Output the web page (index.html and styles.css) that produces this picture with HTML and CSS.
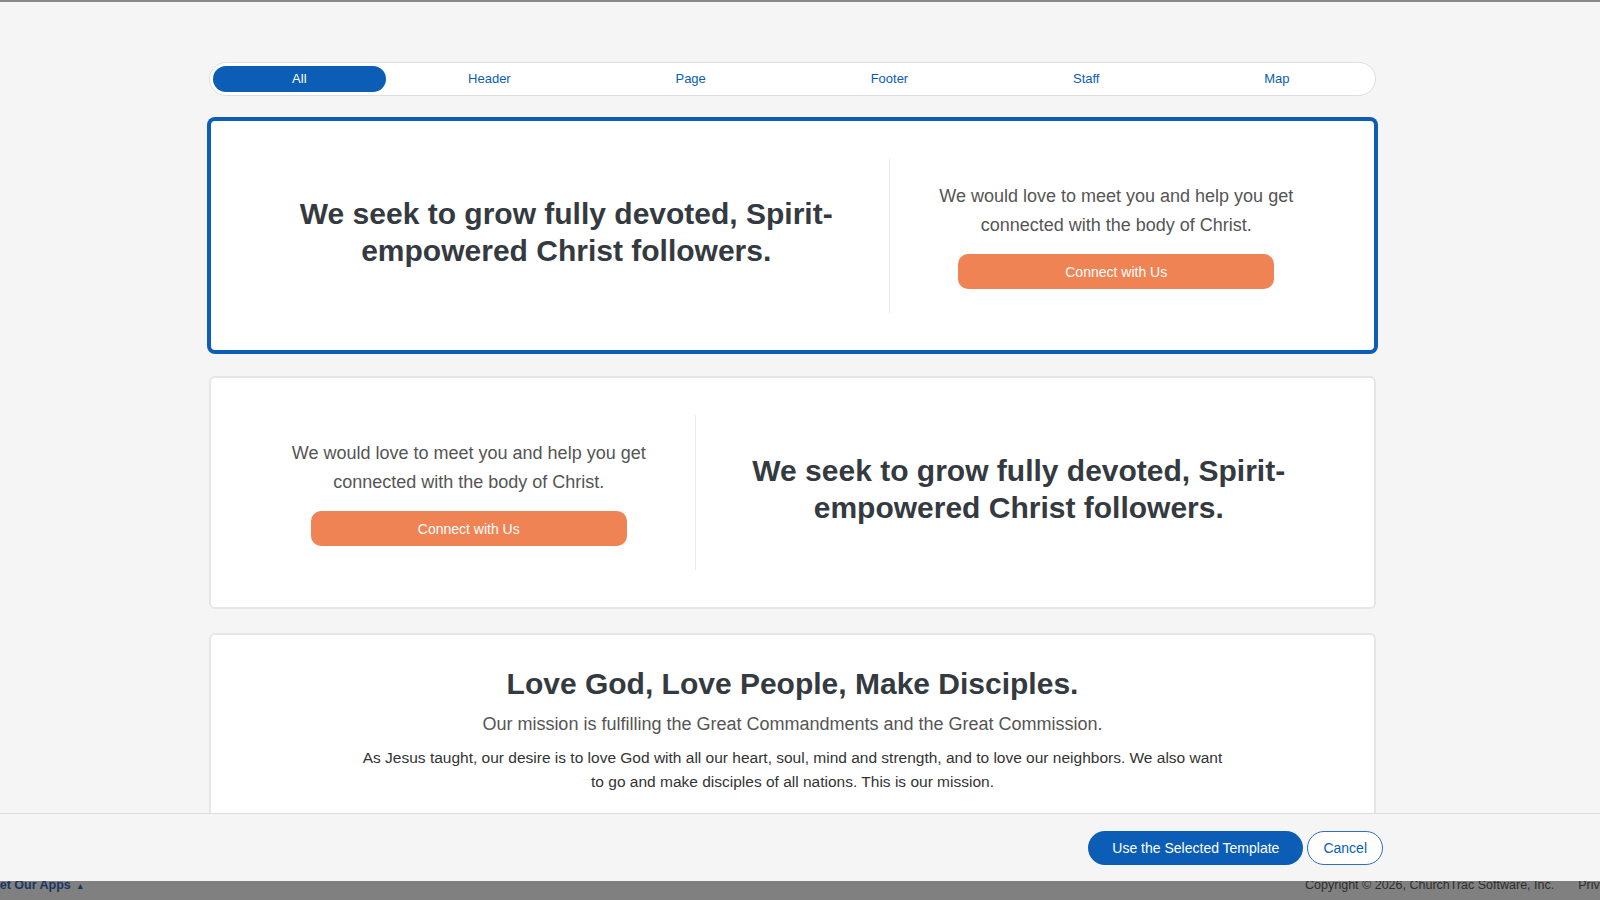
FILE: index.html
```html
<!DOCTYPE html>
<html lang="en">
<head>
    <meta charset="UTF-8">
    <meta name="viewport" content="width=device-width, initial-scale=1.0">
    <title>Choose a Template</title>
    <link rel="stylesheet" href="styles.css">
</head>
<body>
    <div class="page-top"></div>

    <div class="modal">
        <div class="modal-body">
            <div class="picker">
                <ul class="tabs">
                    <li class="active">All</li>
                    <li>Header</li>
                    <li>Page</li>
                    <li>Footer</li>
                    <li>Staff</li>
                    <li>Map</li>
                </ul>

                <!-- headline left, call to action right -->
                <div class="template selected">
                    <div class="col">
                        <h2 class="headline">We seek to grow fully devoted, Spirit-empowered Christ followers.</h2>
                    </div>
                    <div class="col col-cta">
                        <p class="lead">We would love to meet you and help you get connected with the body of Christ.</p>
                        <button class="btn-connect">Connect with Us</button>
                    </div>
                </div>

                <!-- same thing, mirrored -->
                <div class="template mirror">
                    <div class="col col-cta">
                        <p class="lead">We would love to meet you and help you get connected with the body of Christ.</p>
                        <button class="btn-connect">Connect with Us</button>
                    </div>
                    <div class="col">
                        <h2 class="headline">We seek to grow fully devoted, Spirit-empowered Christ followers.</h2>
                    </div>
                </div>

                <div class="template mission">
                    <h2 class="headline">Love God, Love People, Make Disciples.</h2>
                    <p class="mission-sub">Our mission is fulfilling the Great Commandments and the Great Commission.</p>
                    <p class="mission-text">As Jesus taught, our desire is to love God with all our heart, soul, mind and strength, and to love our neighbors. We also want to go and make disciples of all nations. This is our mission.</p>
                </div>
            </div>
        </div>

        <div class="modal-footer">
            <button class="btn-primary">Use the Selected Template</button>
            <button class="btn-outline">Cancel</button>
        </div>
    </div>

    <div class="page-footer">
        <span class="apps">Get Our Apps <span class="caret">&#9652;</span></span>
        <span class="legal">
            <span>Copyright &copy; 2026, ChurchTrac Software, Inc.</span>
            <span>Privacy Policy</span>
        </span>
    </div>
</body>
</html>
```

FILE: styles.css
```css
body {
    margin: 0;
    height: 900px;
    overflow: hidden;
    background: #808080;
    font-family: "Helvetica Neue", "Liberation Sans", Arial, sans-serif;
    color: #343a40;
}

/* dimmed page behind the modal */
.page-top {
    height: 2px;
    background: #8a8a8a;
}

.modal {
    height: 879px;
    background: #f5f5f5;
    display: flex;
    flex-direction: column;
}

.modal-body {
    flex: 1;
    overflow: hidden;
    padding-top: 60px;
}

.picker {
    width: 1167px;
    margin-left: 209px;
}

/* Filter tabs */
.tabs {
    list-style: none;
    margin: 0;
    padding: 3px;
    height: 34px;
    box-sizing: border-box;
    display: flex;
    background: white;
    border: 1px solid #dedede;
    border-radius: 17px;
}

.tabs li {
    flex: 1 1 auto;
    text-align: center;
    font-size: 13px;
    line-height: 26px;
    color: #0b5db6;
    border-radius: 13px;
}

.tabs li.active {
    flex-grow: 0.96;
    background: #0b5db6;
    color: white;
}

/* Template cards */
.template {
    margin-top: 23px;
    min-height: 155px;
    padding: 37px 32px;
    display: grid;
    grid-template-columns: 10fr 7fr;
    background: white;
    border: 2px solid #e6e6e6;
    border-radius: 6px;
}

.template + .template {
    margin-top: 24px;
}

.template.selected {
    border-color: #0b5db6;
    box-shadow: 0 0 0 2px #0b5db6;
}

.template.mirror {
    grid-template-columns: 7fr 10fr;
}

.col {
    display: flex;
    flex-direction: column;
    justify-content: center;
    align-items: center;
    text-align: center;
    padding: 0 40px;
}

.selected .col-cta {
    border-left: 1px solid #ebebeb;
}

.mirror .col-cta {
    border-right: 1px solid #ebebeb;
}

.headline {
    margin: 0;
    font-size: 30px;
    line-height: 37px;
    font-weight: bold;
    color: #343a40;
}

.col .headline {
    padding-bottom: 7px;
}

.lead {
    margin: 0 0 15px;
    font-size: 18px;
    line-height: 28.6px;
    color: #555;
}

.btn-connect {
    width: 316px;
    height: 35px;
    border: 0;
    border-radius: 10px;
    background: #ef8354;
    color: white;
    font-family: inherit;
    font-size: 14px;
}

.template.mission {
    display: block;
    padding: 30px 32px 40px;
    text-align: center;
}

.mission-sub {
    margin: 8px 0;
    font-size: 18px;
    line-height: 28px;
    color: #555;
}

.mission-text {
    max-width: 866px;
    margin: 0 auto;
    font-size: 15.5px;
    line-height: 23.5px;
    color: #333;
}

/* Modal actions */
.modal-footer {
    height: 68px;
    box-sizing: border-box;
    display: flex;
    justify-content: flex-end;
    align-items: center;
    gap: 4px;
    padding-right: 217px;
    border-top: 1px solid #dcdcdc;
}

.modal-footer button {
    height: 34px;
    border-radius: 17px;
    font-family: inherit;
    font-size: 14px;
}

.btn-primary {
    padding: 0 24px;
    border: 0;
    background: #0b5db6;
    color: white;
}

.btn-outline {
    padding: 0 15px;
    border: 1px solid #2f6fbd;
    background: white;
    color: #0b5db6;
}

/* dimmed page footer */
.page-footer {
    height: 19px;
    display: flex;
    justify-content: space-between;
    align-items: flex-start;
    white-space: nowrap;
    overflow: hidden;
    font-size: 12.5px;
    line-height: 14px;
}

.page-footer > span {
    margin-top: -3px;
}

.apps {
    margin-left: -10px;
    font-weight: bold;
    color: #1b3660;
}

.caret {
    font-size: 9px;
    margin-left: 4px;
}

.legal {
    display: flex;
    gap: 24px;
    margin-right: -56px;
    color: #2e2e2e;
}
```
